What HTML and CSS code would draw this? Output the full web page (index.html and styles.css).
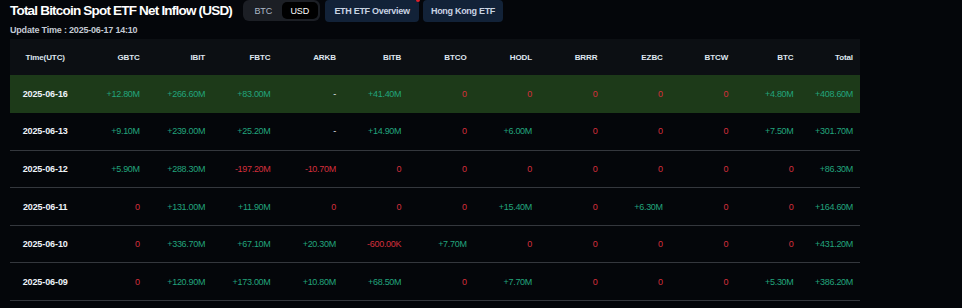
FILE: index.html
```html
<!DOCTYPE html>
<html>
<head>
<meta charset="utf-8">
<link rel="stylesheet" href="styles.css">
</head>
<body>
<div class="page">
  <div class="topbar">
    <h1 class="title">Total Bitcoin Spot ETF Net Inflow (USD)</h1>
    <div class="toggle">
      <span class="seg">BTC</span>
      <span class="seg active">USD</span>
    </div>
    <div class="btn btn-eth">ETH ETF Overview<span class="dot"></span></div>
    <div class="btn btn-hk">Hong Kong ETF</div>
  </div>
  <div class="update">Update Time : 2025-06-17 14:10</div>
  <table class="grid">
    <thead>
      <tr>
        <th class="c-time">Time(UTC)</th><th>GBTC</th><th>IBIT</th><th>FBTC</th><th>ARKB</th><th>BITB</th><th>BTCO</th><th>HODL</th><th>BRRR</th><th>EZBC</th><th>BTCW</th><th>BTC</th><th class="c-total">Total</th>
      </tr>
    </thead>
    <tbody>
      <tr class="hl">
        <td class="c-time">2025-06-16</td><td class="up">+12.80M</td><td class="up">+266.60M</td><td class="up">+83.00M</td><td class="nil">-</td><td class="up">+41.40M</td><td class="dn">0</td><td class="dn">0</td><td class="dn">0</td><td class="dn">0</td><td class="dn">0</td><td class="up">+4.80M</td><td class="up c-total">+408.60M</td>
      </tr>
      <tr>
        <td class="c-time">2025-06-13</td><td class="up">+9.10M</td><td class="up">+239.00M</td><td class="up">+25.20M</td><td class="nil">-</td><td class="up">+14.90M</td><td class="dn">0</td><td class="up">+6.00M</td><td class="dn">0</td><td class="dn">0</td><td class="dn">0</td><td class="up">+7.50M</td><td class="up c-total">+301.70M</td>
      </tr>
      <tr>
        <td class="c-time">2025-06-12</td><td class="up">+5.90M</td><td class="up">+288.30M</td><td class="dn">-197.20M</td><td class="dn">-10.70M</td><td class="dn">0</td><td class="dn">0</td><td class="dn">0</td><td class="dn">0</td><td class="dn">0</td><td class="dn">0</td><td class="dn">0</td><td class="up c-total">+86.30M</td>
      </tr>
      <tr>
        <td class="c-time">2025-06-11</td><td class="dn">0</td><td class="up">+131.00M</td><td class="up">+11.90M</td><td class="dn">0</td><td class="dn">0</td><td class="dn">0</td><td class="up">+15.40M</td><td class="dn">0</td><td class="up">+6.30M</td><td class="dn">0</td><td class="dn">0</td><td class="up c-total">+164.60M</td>
      </tr>
      <tr>
        <td class="c-time">2025-06-10</td><td class="dn">0</td><td class="up">+336.70M</td><td class="up">+67.10M</td><td class="up">+20.30M</td><td class="dn">-600.00K</td><td class="up">+7.70M</td><td class="dn">0</td><td class="dn">0</td><td class="dn">0</td><td class="dn">0</td><td class="dn">0</td><td class="up c-total">+431.20M</td>
      </tr>
      <tr>
        <td class="c-time">2025-06-09</td><td class="dn">0</td><td class="up">+120.90M</td><td class="up">+173.00M</td><td class="up">+10.80M</td><td class="up">+68.50M</td><td class="dn">0</td><td class="up">+7.70M</td><td class="dn">0</td><td class="dn">0</td><td class="dn">0</td><td class="up">+5.30M</td><td class="up c-total">+386.20M</td>
      </tr>
    </tbody>
  </table>
</div>
</body>
</html>
```

FILE: styles.css
```css
html, body {
  margin: 0;
  padding: 0;
  background: #04060a;
}
body {
  font-family: "Liberation Sans", Arial, sans-serif;
  color: #e6ebf2;
}
.page {
  padding: 0 0 0 10px;
  width: 850px;
}
.topbar {
  display: flex;
  align-items: flex-start;
  height: 22px;
}
.title {
  margin: 0;
  flex: 0 0 233px;
  font-size: 13.5px;
  font-weight: 700;
  line-height: 21px;
  color: #ffffff;
  white-space: nowrap;
  letter-spacing: -0.8px;
}
.toggle {
  display: flex;
  align-items: center;
  height: 21px;
  width: 77px;
  box-sizing: border-box;
  padding: 2px;
  background: #1c1f25;
  border-radius: 6px;
  margin-right: 5px;
}
.seg {
  flex: 1;
  height: 100%;
  display: flex;
  align-items: center;
  justify-content: center;
  font-size: 9px;
  letter-spacing: -0.2px;
  color: #aeb9c8;
  border-radius: 5px;
}
.seg.active {
  background: #000000;
  color: #ffffff;
}
.btn {
  position: relative;
  height: 22px;
  box-sizing: border-box;
  display: flex;
  align-items: center;
  justify-content: center;
  background: #122238;
  border-radius: 4px;
  font-size: 9px;
  font-weight: 700;
  letter-spacing: -0.3px;
  color: #c9d4e3;
  margin-right: 4px;
  white-space: nowrap;
}
.btn-eth {
  width: 94px;
}
.btn-hk {
  width: 80px;
}
.dot {
  position: absolute;
  top: -2px;
  right: -1px;
  width: 4px;
  height: 4px;
  border-radius: 50%;
  background: #e0212c;
}
.update {
  font-size: 9px;
  font-weight: 700;
  letter-spacing: -0.2px;
  color: #c3cad4;
  line-height: 12px;
  margin-top: 2px;
  height: 15px;
}
.grid {
  width: 850px;
  table-layout: fixed;
  border-collapse: collapse;
}
.grid th, .grid td {
  text-align: right;
  padding: 0 1px 0 0;
  white-space: nowrap;
}
.grid thead tr {
  background: #0c0f13;
  height: 36px;
}
.grid th {
  font-size: 8px;
  font-weight: 700;
  letter-spacing: -0.1px;
  color: #dfe6ef;
}
.grid tbody tr {
  height: 37.6px;
  border-bottom: 1px solid #34373d;
}
.grid tbody tr.hl {
  background: #1d3a19;
  border-bottom-color: #1d3a19;
}
.grid td {
  font-size: 9px;
  letter-spacing: -0.3px;
  color: #e8edf3;
}
.grid .c-time {
  text-align: center;
  padding: 0 0 0 5px;
}
.grid td.c-time {
  font-weight: 700;
  letter-spacing: -0.1px;
  color: #eef3f9;
}
.grid .c-total {
  padding-right: 7px;
}
.grid td.up {
  color: #22a47c;
}
.grid td.dn {
  color: #d52f3c;
}
.grid td.nil {
  color: #e8edf3;
}
```
